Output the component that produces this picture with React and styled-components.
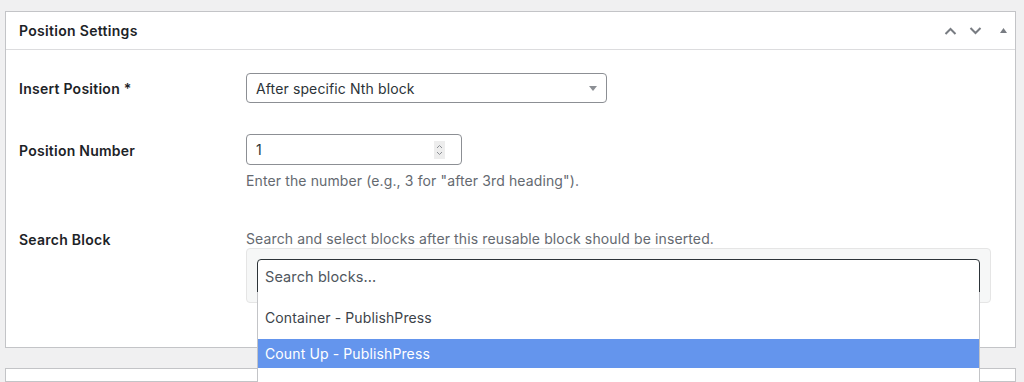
import React from "react";
import styled, { createGlobalStyle } from "styled-components";

const Global = createGlobalStyle`
  html, body { margin: 0; padding: 0; background: #f0f0f1; height: 382px; overflow: hidden; }
  body { font-family: Inter, "Open Sans", "Liberation Sans", sans-serif; font-size: 14px; color: #2c3338; letter-spacing: 0.12px; }
  * { box-sizing: border-box; }
`;

const Page = styled.div`
  padding: 11px 8px 0 5px;
  display: flex;
  flex-direction: column;
  gap: 20px;
`;

const Panel = styled.section`
  background: #fff;
  border: 1px solid #c3c4c7;
  position: relative;
  min-height: ${(p) => p.$minH || 0}px;
`;

const Header = styled.div`
  height: 38px;
  border-bottom: 1px solid #dcdcde;
  display: flex;
  align-items: center;
  justify-content: space-between;
  padding: 0 8px 0 13px;
`;

const Title = styled.h2`
  margin: 0;
  font-size: 14px;
  font-weight: 600;
  color: #1d2327;
  line-height: 1.4;
  letter-spacing: 0.3px;
`;

const Actions = styled.div`
  display: flex;
  align-items: center;
`;

const IconBtn = styled.span`
  display: inline-flex;
  color: #787c82;
  margin-left: ${(p) => p.$ml || 0}px;
`;

const Body = styled.div`
  padding: 23px 24px 44px 13px;
  display: flex;
  flex-direction: column;
`;

const Row = styled.div`
  display: grid;
  grid-template-columns: 227px 1fr;
  margin-top: ${(p) => p.$mt || 0}px;
`;

const Label = styled.div`
  font-weight: 600;
  font-size: 14px;
  color: #1d2327;
  line-height: 20px;
  letter-spacing: 0.25px;
  padding-top: ${(p) => p.$pt || 0}px;
`;

const Field = styled.div`
  display: flex;
  flex-direction: column;
  align-items: flex-start;
`;

const Select = styled.div`
  width: 361px;
  height: 30px;
  border: 1px solid #8c8f94;
  border-radius: 4px;
  display: flex;
  align-items: center;
  justify-content: space-between;
  padding: 0 9px 0 9px;
  color: #2c3338;
  font-size: 14px;
`;

const NumberInput = styled.div`
  width: 216px;
  height: 31px;
  border: 1px solid #8c8f94;
  border-radius: 4px;
  display: flex;
  align-items: center;
  justify-content: space-between;
  padding: 0 16px 0 9px;
  font-size: 14px;
  color: #2c3338;
`;

const Spinner = styled.span`
  width: 11px;
  height: 18px;
  background: #ededed;
  display: inline-flex;
  align-items: center;
  justify-content: center;
`;

const Help = styled.p`
  margin: ${(p) => p.$mt || 0}px 0 0;
  color: #646970;
  font-size: 14px;
  line-height: ${(p) => p.$lh || 20}px;
`;

const SearchBox = styled.div`
  align-self: stretch;
  background: #f6f7f7;
  border: 1px solid #e5e5e5;
  border-radius: 4px;
  padding: 10px 10px 9px 10px;
`;

const SearchWrap = styled.div`
  position: relative;
`;

const SearchInput = styled.input`
  display: block;
  width: 100%;
  height: 34px;
  border: 1px solid #2c3338;
  border-radius: 4px 4px 0 0;
  background: #fff;
  padding: 0 7px;
  font-family: inherit;
  font-size: 14.5px;
  letter-spacing: 0.1px;
  color: #2c3338;
  outline: none;
  &::placeholder { color: #50575e; opacity: 1; }
`;

const Dropdown = styled.ul`
  position: absolute;
  left: 0;
  right: 0;
  top: 33px;
  margin: 0;
  padding: 11px 0 0;
  list-style: none;
  background: #fff;
  border-left: 1px solid #c3c4c7;
  border-right: 1px solid #c3c4c7;
  height: 110px;
  z-index: 5;
`;

const Option = styled.li`
  height: 29px;
  margin-bottom: 7px;
  padding: 0 7px;
  display: flex;
  align-items: center;
  font-size: 14px;
  background: ${(p) => (p.$active ? "#6495ed" : "transparent")};
  color: ${(p) => (p.$active ? "#fff" : "#3c434a")};
`;

const Chevron = ({ up }) => (
  <svg width="13" height="8" viewBox="0 0 13 8" fill="none">
    <path
      d={up ? "M1.5 7 L6.5 2 L11.5 7" : "M1.5 1 L6.5 6 L11.5 1"}
      stroke="currentColor"
      strokeWidth="2"
    />
  </svg>
);

export default function App() {
  return (
    <>
      <Global />
      <Page>
        <Panel>
          <Header>
            <Title>Position Settings</Title>
            <Actions>
              <IconBtn><Chevron up /></IconBtn>
              <IconBtn $ml={12}><Chevron /></IconBtn>
              <IconBtn $ml={18}>
                <svg width="7" height="5" viewBox="0 0 7 5">
                  <path d="M0 5 L3.5 0 L7 5 Z" fill="currentColor" />
                </svg>
              </IconBtn>
            </Actions>
          </Header>
          <Body>
            <Row>
              <Label $pt={6}>Insert Position *</Label>
              <Field>
                <Select>
                  <span>After specific Nth block</span>
                  <svg width="8" height="5" viewBox="0 0 8 5">
                    <path d="M0 0 L8 0 L4 5 Z" fill="#8c8f94" />
                  </svg>
                </Select>
              </Field>
            </Row>
            <Row $mt={31}>
              <Label $pt={7}>Position Number</Label>
              <Field>
                <NumberInput>
                  <span>1</span>
                  <Spinner>
                    <svg width="7" height="12" viewBox="0 0 7 12" fill="none">
                      <path d="M1 4 L3.5 1.5 L6 4" stroke="#8c8f94" strokeWidth="1" />
                      <path d="M1 8 L3.5 10.5 L6 8" stroke="#8c8f94" strokeWidth="1" />
                    </svg>
                  </Spinner>
                </NumberInput>
                <Help $mt={6}>Enter the number (e.g., 3 for "after 3rd heading").</Help>
              </Field>
            </Row>
            <Row $mt={38}>
              <Label $pt={1}>Search Block</Label>
              <Field>
                <Help $lh={18} $mt={1}>
                  Search and select blocks after this reusable block should be inserted.
                </Help>
                <SearchBox>
                  <SearchWrap>
                    <SearchInput placeholder="Search blocks..." readOnly />
                    <Dropdown>
                      <Option>Container - PublishPress</Option>
                      <Option $active>Count Up - PublishPress</Option>
                    </Dropdown>
                  </SearchWrap>
                </SearchBox>
              </Field>
            </Row>
          </Body>
        </Panel>
        <Panel $minH={14} />
      </Page>
    </>
  );
}
